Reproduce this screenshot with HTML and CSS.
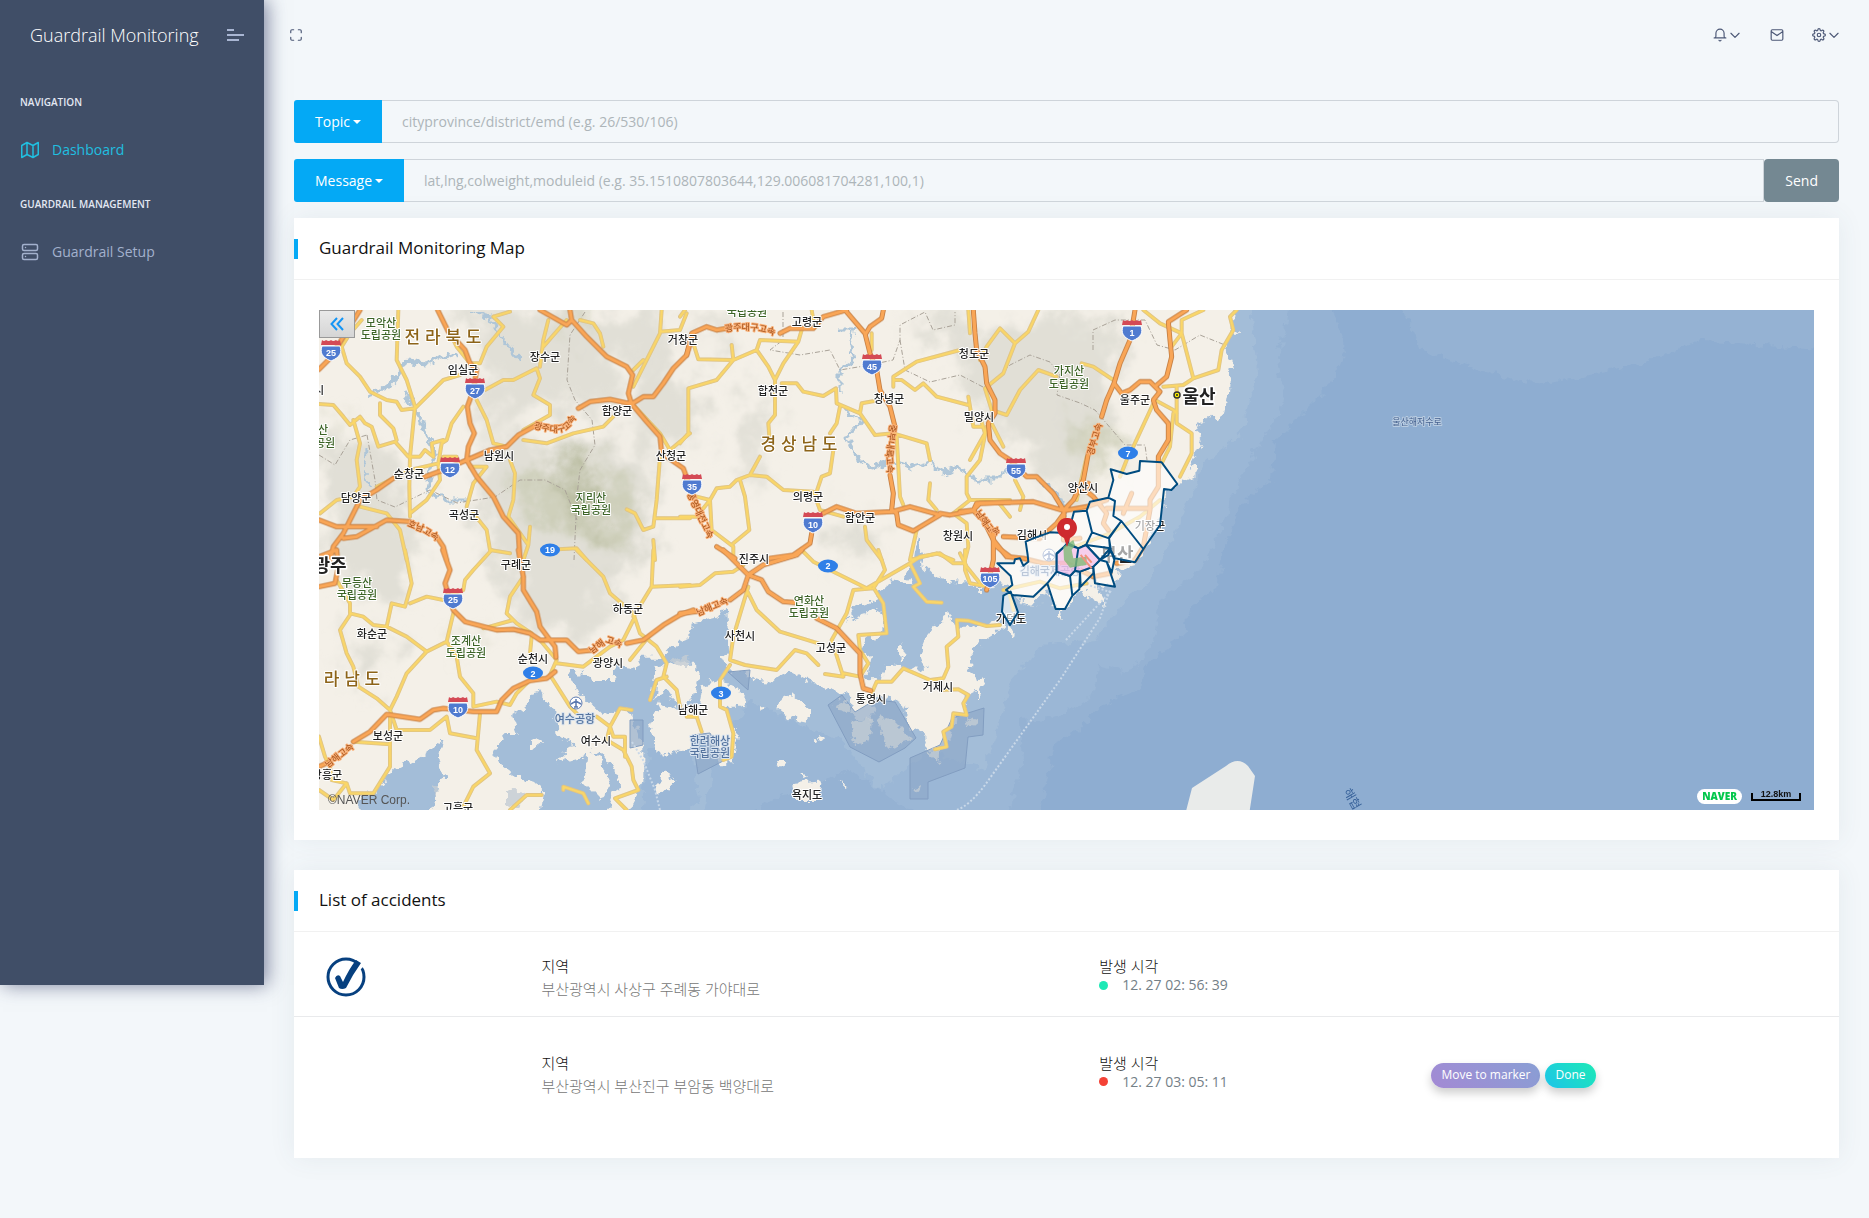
FILE: index.html
```html
<!DOCTYPE html>
<html lang="ko">
<head>
<meta charset="utf-8">
<title>Guardrail Monitoring</title>
<link rel="stylesheet" href="styles.css">
</head>
<body>
<div class="app">
  <aside class="sidebar">
    <div class="brand">
      <a class="brand-name" href="#">Guardrail Monitoring</a>
      <button class="icon-btn menu-btn" type="button" aria-label="Toggle menu">
        <svg width="17" height="12" viewBox="0 0 17 12"><path d="M0 1h7M0 6h17M0 11h12" stroke="#a9b6d3" stroke-width="2"/></svg>
      </button>
    </div>
    <nav>
      <h2 class="nav-title">NAVIGATION</h2>
      <a class="nav-link active" href="#">
        <svg width="18" height="18" viewBox="0 0 24 24"><path d="M1 6v16l7-4 8 4 7-4V2l-7 4-8-4-7 4zM8 2v16M16 6v16"/></svg>
        Dashboard</a>
      <h2 class="nav-title">GUARDRAIL MANAGEMENT</h2>
      <a class="nav-link" href="#">
        <svg width="18" height="18" viewBox="0 0 24 24"><rect x="2" y="2" width="20" height="8" rx="2"/><rect x="2" y="14" width="20" height="8" rx="2"/><path d="M6 6v.01M6 18v.01"/></svg>
        Guardrail Setup</a>
    </nav>
  </aside>

  <div class="page">
    <header class="topbar">
      <button class="icon-btn" type="button" aria-label="Full screen">
        <svg width="14" height="14" viewBox="0 0 24 24"><path d="M8 3H5a2 2 0 0 0-2 2v3m18 0V5a2 2 0 0 0-2-2h-3m0 18h3a2 2 0 0 0 2-2v-3M3 16v3a2 2 0 0 0 2 2h3"/></svg>
      </button>
      <div class="top-actions">
        <button class="icon-btn" type="button" aria-label="Notifications">
          <svg width="14" height="14" viewBox="0 0 24 24"><path d="M22 17H2a3 3 0 0 0 3-3V9a7 7 0 0 1 14 0v5a3 3 0 0 0 3 3zm-8.27 4a2 2 0 0 1-3.46 0"/></svg>
          <svg width="14" height="14" viewBox="0 0 24 24"><path class="chev" d="M5 9l7 7 7-7"/></svg>
        </button>
        <button class="icon-btn" type="button" aria-label="Messages">
          <svg width="14" height="14" viewBox="0 0 24 24"><path d="M4 3h16a2 2 0 0 1 2 2v14a2 2 0 0 1-2 2H4a2 2 0 0 1-2-2V5a2 2 0 0 1 2-2zM2 6l10 7 10-7"/></svg>
        </button>
        <button class="icon-btn" type="button" aria-label="Settings">
          <svg width="14" height="14" viewBox="0 0 24 24"><circle cx="12" cy="12" r="3"/><path d="M19.4 15a1.65 1.65 0 0 0 .33 1.82l.06.06a2 2 0 1 1-2.83 2.83l-.06-.06a1.65 1.65 0 0 0-2.8 1.17V21a2 2 0 0 1-4 0v-.09A1.65 1.65 0 0 0 7.2 19.6l-.06.06a2 2 0 1 1-2.83-2.83l.06-.06A1.65 1.65 0 0 0 3.1 14H3a2 2 0 0 1 0-4h.09A1.65 1.65 0 0 0 4.4 7.2l-.06-.06a2 2 0 1 1 2.83-2.83l.06.06A1.65 1.65 0 0 0 10 3.1V3a2 2 0 0 1 4 0v.09a1.65 1.65 0 0 0 2.8 1.3l.06-.06a2 2 0 1 1 2.83 2.83l-.06.06A1.65 1.65 0 0 0 20.9 10H21a2 2 0 0 1 0 4h-.09a1.65 1.65 0 0 0-1.51 1z"/></svg>
          <svg width="14" height="14" viewBox="0 0 24 24"><path class="chev" d="M5 9l7 7 7-7"/></svg>
        </button>
      </div>
    </header>

    <main class="content">
      <form class="publish">
        <div class="input-row">
          <button class="addon" type="button">Topic<span class="caret"></span></button>
          <input class="field field-last" type="text" aria-label="Topic" placeholder="cityprovince/district/emd (e.g. 26/530/106)">
        </div>
        <div class="input-row">
          <button class="addon" type="button">Message<span class="caret"></span></button>
          <input class="field" type="text" aria-label="Message" placeholder="lat,lng,colweight,moduleid (e.g. 35.1510807803644,129.006081704281,100,1)">
          <button class="send" type="submit">Send</button>
        </div>
      </form>

      <section class="card">
        <h1 class="card-title">Guardrail Monitoring Map</h1>
        <div class="card-body">
          <div class="map">
            <svg class="map-canvas" viewBox="319 310 1495 500" preserveAspectRatio="xMinYMid slice">
              <defs>
                <filter id="rough" x="0" y="0" width="1" height="1"><feTurbulence type="fractalNoise" baseFrequency=".11" numOctaves="3" seed="4"/><feDisplacementMap in="SourceGraphic" scale="13" xChannelSelector="R" yChannelSelector="G"/></filter>
                <filter id="hill" x="-.2" y="-.2" width="1.4" height="1.4"><feGaussianBlur stdDeviation="9" result="b"/><feTurbulence type="fractalNoise" baseFrequency=".03" numOctaves="4" seed="9"/><feDisplacementMap in="b" scale="70" xChannelSelector="R" yChannelSelector="G"/></filter>
                <g id="yellow" transform="translate(310 300) scale(.33333)">
                  <path d="M155 60L120 100 95 140 110 190 150 230 180 275 230 300 260 305 275 330 315 325 400 240 450 225M265 30L260 180 290 240 315 320 300 470 298 560 300 650M27 312L70 315 100 350 120 375 150 350 165 370 185 380 205 440 255 425 295 470 330 470 345 450 370 470 365 430 400 420M210 310L210 345 250 385 260 420M460 320L425 370 410 420 395 430 385 490 300 510 200 560M130 360L150 430 140 480 150 560 130 590 80 600 30 640M150 620L230 640 270 690 290 780M300 640L350 600 390 540 385 490M500 300L530 360 550 430 590 440M525 270L580 240 610 240 680 205 690 235 670 285 720 315 720 345 640 390M690 200L700 120 715 60M700 140L770 60M810 60L850 70 870 100 880 140M640 420L710 430 790 400 880 380 910 350M975 320L1050 400 1080 450M970 260L1010 180 1050 100 1055 30M970 210L1000 180M1050 95L1110 90 1130 40M1080 450L1140 400M600 480L615 520 610 600 595 650 655 735 640 780M655 735L660 680M480 500L530 500 490 550 470 620M490 640L530 690 540 750 600 760M1050 470L1040 600 1030 680 1000 690 975 640 950 628M1035 655L1140 655M550 50L580 80 530 140 510 190 480 190 440 140 420 100M1030 720L1035 780M700 750L800 745 830 780M400 470L440 470M550 50L600 35"/>
                  <path transform="translate(0 750)" d="M285 0L305 100 285 170 245 160 230 230M300 160L350 140 400 150M80 90L120 160 120 190 160 200 190 225 230 230 290 260 350 305 410 275 430 190M120 195L90 240 110 310 130 350 145 410 200 445 240 480 260 540 360 540 410 500M350 305L290 370 260 440 240 480M410 275L440 320 450 380 490 430 490 470 560 455 600 465 620 430 650 400M545 0L490 60 465 90 460 120 430 130M640 80L600 140 590 190 620 220 665 250M520 235L610 210M665 260L660 310M690 270L740 330 720 375 780 470 800 490M740 340L820 350 900 290 940 270 970 210M800 0L880 80 900 130 970 190 990 250 1040 290 1070 340 1060 380 1100 420 1110 470M1070 380L1040 390 1020 450M1020 255L960 330M1030 0L1025 110 970 200M1025 110L1140 105M510 490L500 600 540 670 490 710 460 770M410 500L420 550 500 565M27 560L45 620 60 650 65 690 110 700 120 730 190 730 240 650 240 500M130 575L240 583M27 720L70 750 110 700M600 780L650 735 695 735M760 720L760 710 820 730 835 760M860 500L900 530 890 570 940 600 965 650 970 690 985 720 915 745 950 780M900 530L930 475 965 480M900 530L910 560 945 560 945 620"/>
                  <path transform="translate(1110 0)" d="M40 130L55 178 160 180 230 150 240 120 355 125 365 90M155 135L160 180 110 240 25 265 25 400 0 430M230 150L265 200 285 240 310 190 355 125M285 240L285 345 265 370 268 410M240 470L210 525 260 530 310 570 400 575 420 630 490 650M210 525L170 540 150 560 110 565 90 600 95 690 160 740 160 780M180 540L195 590 208 690 160 730M0 650L50 650 90 600 50 590M305 250L350 250 370 275 430 288 468 265 470 310 540 340 585 405 640 400 740 430 750 480M480 320L470 370 450 400M460 450L450 520 425 530 405 590M540 340L545 310 600 300M640 260L640 230 710 185 840 150M640 240L665 240 705 270 730 250 770 290 865 315M865 290L880 380 905 380M650 410L655 500 660 590 670 615M750 550L745 600 770 630M555 680L560 720 605 780M920 380L900 480 860 530 860 580 870 600 990 600M870 600L820 640 860 670 865 740 855 780M710 690L690 780M395 30L400 60M950 600L990 650M575 100V150M865 30L870 100M0 50L15 30M690 780L770 760 820 780"/>
                  <path transform="translate(1110 750)" d="M0 110L60 105 105 70 160 65 190 45M205 110L160 260 150 330 195 345 290 360 345 300 380 310 415 345M200 120L230 180 300 245 415 280M365 0L400 35 560 115 620 80 690 40 720 20 780 10 820 40 850 40M595 0L615 60 580 115 520 120 500 190 455 270 490 380 435 372M490 370L540 380M585 120L610 160 620 250 535 255 540 300 565 340 540 380M690 40L700 60 720 100 700 110 740 155 785 158M855 0L855 60 870 100 925 110M150 345L120 390 120 470 140 480 160 550 155 620 130 630M20 500L50 500 65 545M575 430L590 395 635 395 670 355 750 390 790 385 805 350 800 290 835 260 830 210 865 212 920 228 960 225M780 420L835 418 865 435 850 460 860 495 820 490 815 530 790 545 800 590 765 598"/>
                  <path transform="translate(1950 0)" d="M165 130L120 85 80 140 60 180M165 130L130 220 75 265 95 330 140 345 180 270 235 210 290 230M165 130L205 95 235 30M365 190L400 200 460 240M550 30L600 70 665 100 700 235 775 210 785 150 820 90 810 50 830 30M665 100L635 140M665 100L665 60 730 30M610 260L670 255 700 235M650 260L650 370 695 400 695 460 660 530M585 300L640 330 650 340M585 300L520 440M500 480L480 530M165 540L190 590 180 630M380 470L350 600M640 340L630 440 600 500M130 870L240 845 300 865 380 850M345 740L450 700 540 650 600 600M60 350L75 400 30 480M150 885L160 930M95 370L130 440M0 760L20 800 60 850"/>
                </g>
                <g id="orange" transform="translate(310 300) scale(.33333)">
                  <path d="M27 208L60 175 100 110 150 30M383 30L415 95 465 150 480 190 500 210 490 270 472 320 480 370 493 400 475 440 470 480 500 530 550 590 580 650 625 700 630 780M345 530L400 510 470 480 540 450 590 440 625 405 680 375M805 325L840 305 900 298 965 312 1000 290 1030 290 1060 250 1090 205 1130 165 1150 100M690 30L770 75 785 60 780 30M785 60L830 110 890 170 950 200 968 225 955 280 965 312 1010 365 1050 410 1055 460 1120 505 1140 560M250 535L200 570 150 600 120 660 100 700 70 740 60 780M27 660L80 680 200 680M100 715L140 710 230 660 300 665M380 710L400 740 410 780"/>
                  <path transform="translate(0 750)" d="M398 0L420 60 405 100 430 180 465 215 560 240 610 238 660 250 690 270 770 270 805 305 850 300M625 0L640 80 640 120 680 185 690 230 720 270 735 290 738 322M950 280L1000 270 1060 225 1110 195 1150 180M735 365L710 385 660 392 610 415 575 450 560 485 490 485 400 475 370 480 330 508 230 493 180 545 130 575M60 635L27 650M27 110L75 100 85 50 80 0M27 20L80 0"/>
                  <path transform="translate(1110 0)" d="M20 165L35 100 80 80 110 90 140 85M300 100L330 85 400 85 430 50 500 30M495 30L555 100 570 160 590 210 600 270 630 320 645 380M558 100L570 80 605 55 610 30M630 525L640 580 635 630 650 640 655 675 700 693 780 645 690 620 635 635 530 640 470 620 430 640M780 640L810 645 880 632 890 610 990 607M880 632L910 660 950 740 990 770M880 30L885 100 890 150 915 200 920 250 945 300 945 340 925 370 930 420 960 460 990 480M20 540L30 560M110 740L165 775M395 700L390 730 340 765 270 775"/>
                  <path transform="translate(1110 750)" d="M130 0L205 75 245 90 265 125 310 155 345 158M0 190L50 185M150 150L190 120 205 75 250 45 350 15 365 0M410 205L470 235 540 310 540 370 550 415 572 422"/>
                  <path transform="translate(1950 0)" d="M150 480L200 530 230 530 280 580 312 632M0 635L40 630 60 610 220 605 312 632 380 620 440 600M310 632L340 600 370 540 385 460M425 350L440 300 462 250 480 190 510 120 525 30M385 550L375 570 400 590 440 640 430 670 445 690M680 30L625 65 630 120 635 170 620 230 585 260 600 275 580 300 590 330 625 370 625 420 595 470 595 560 570 600 570 630 550 740 525 780 470 790M462 250L485 280 510 270 540 245 570 245 600 275M312 640L290 670 240 715 130 710M100 720L140 770 190 775 250 790 320 790 400 830 450 820M100 700L100 780 80 870M440 625L570 625M515 580L490 640M312 640L310 720 360 715"/>
                </g>
                <g id="shield"><path d="M-9-4C-11 2-10 7 0 11C10 7 11 2 9-4Z" fill="#507bd0" stroke="#fff" stroke-width="1"/><path d="M-9-10Q-7-8-5-10Q-2-8 0-10Q2-8 5-10Q7-8 9-10L10-5H-10Z" fill="#d44a55"/></g>
                <ellipse id="national" rx="10" ry="6.5" fill="#2f7fe8"/>
                <path id="h1" d="M533 428Q566 438 572 424L588 402"/><path id="h2" d="M407 526L422 532 445 546"/><path id="h3" d="M592 654L607 643 629 650"/><path id="h4" d="M328 768L362 742"/><path id="h5" d="M725 332Q765 325 790 345"/><path id="h6" d="M890 424L886 455 888 486"/><path id="h7" d="M687 494L699 520 716 556"/><path id="h8" d="M975 513L987 530 1009 541"/><path id="h9" d="M698 616L736 600"/><path id="h10" d="M1093 456L1106 412"/>
              </defs>
              <rect x="319" y="310" width="1495" height="500" fill="#f4f0e8"/>
              <g filter="url(#hill)">
                <g fill="#dddbd2" opacity=".8">
                  <path d="M470 310H680L660 350 600 380 620 430 560 400 480 440 490 380Z"/><path d="M480 440L660 450 650 540 600 620 540 640 500 590 480 520Z"/><path d="M630 340L700 370 690 450 640 440Z"/><path d="M740 390L770 400 765 470 745 490Z"/><path d="M900 320H1120V390L1090 440 1070 520 1030 460 990 430 960 360Z"/><path d="M319 430L400 450 420 600 370 610 325 540Z"/><path d="M340 640L390 640 380 690 350 680Z"/><path d="M690 320L740 340 720 360Z"/><path d="M830 510L880 520 860 560 830 550Z"/>
                </g>
                <g fill="#c6c8af" opacity=".7"><path d="M540 460L610 470 640 500 620 550 570 540 520 500Z"/><path d="M562 310H600L590 325 570 325Z"/><path d="M1065 410L1110 420 1120 450 1100 480 1080 440Z"/><path d="M325 412L338 420 330 435Z"/><path d="M455 632L475 635 465 650Z"/></g>
                <path d="M560 460L590 490 600 540 570 500Z" fill="#a9ad8c" opacity=".8"/>
              </g>
              <g fill="none" stroke="#afc6d8" stroke-width="3" stroke-linejoin="round" filter="url(#rough)">
                <path d="M470 312L490 317 497 333 520 360M460 353L447 357 427 363 407 360 400 373 380 390 370 393M403 390L420 417 423 423 430 447 437 457 430 470 427 490 443 500 470 500M366 451L364 475 370 490"/>
                <path stroke-width="5" d="M427 363L407 360 400 373 384 391"/>
                <path d="M837 330L854 330 850 345 853 360 840 370 840 393M843 408L862 420 847 437 853 452 870 467 893 460 910 468 927 463 943 472 960 468 977 480 997 480 1010 467"/>
                <path d="M1040 480L1060 497 1067 513 1066 545"/>
              </g>
              <g fill="none" stroke="#a9a298" stroke-width="1" stroke-dasharray="5 2 1 2">
                <path d="M585 312L570 335 567 380 575 400 592 420 595 445 580 470 577 495 574 560M367 435L375 480 377 500 395 507 430 490 457 503 495 497 520 480 545 480 565 490 577 520M319 455L335 465 350 440 367 435M783 312V340L770 350 800 355 830 350 840 370 870 365 893 360 900 340 900 325 925 312 933 330 955 325 955 312M900 340L905 370 930 382 960 375 985 388 1010 365 1030 355 1050 362 1060 375 1057 395 1080 403 1095 410 1125 445 1145 445 1147 460M1093 350V330L1115 320 1145 320 1157 345 1175 350 1200 335 1225 345"/>
              </g>
              <g filter="url(#rough)">
                <g id="sea" fill="#a3bdd8">
                  <path transform="translate(310 300) scale(.33333)" d="M2785 -30L2770 80 2775 100 2755 130 2745 150 2765 200 2760 270 2750 290 2740 350 2720 370 2695 345 2685 370 2650 385 2680 410 2665 450 2640 500 2660 510 2650 530 2615 545 2600 570 2562 570 2560 620 2540 680 2500 750 2478 790 2425 805 2415 860 2370 850 2345 840 2390 920 2350 900 2320 870 2290 900 2270 925 2240 930 2215 870 2190 880 2170 905 2130 900 2095 880 2100 850 2050 840 2040 870 2000 870 1980 850 1910 840 1870 830 1840 800 1825 810 1830 840 1810 860 1750 835 1730 860 1700 880 1670 940 1620 955 1610 965 1700 925 1730 940 1720 1000 1670 1020 1655 1050 1680 1070 1670 1120 1700 1150 1730 1100 1790 1100 1850 1110 1830 1060 1850 1010 1900 950 1920 940 1940 980 1980 980 2070 970 2080 985 2040 1010 1990 1050 1980 1120 2010 1140 1990 1180 1970 1190 1970 1230 1930 1270 1910 1330 1880 1360 1840 1340 1850 1310 1790 1270 1780 1230 1800 1220 1770 1210 1730 1190 1700 1190 1680 1270 1630 1250 1620 1190 1600 1180 1510 1150 1440 1110 1410 1130 1390 1150 1330 1140 1300 1110 1260 1120 1240 1080 1260 1050 1255 970 1250 920 1230 950 1150 970 1130 1020 1110 1015 1060 1070 1000 1070 980 1110 915 1100 920 1140 850 1140 800 1110 770 1110 800 1170 850 1220 880 1250 950 1220 1000 1340 1000 1450 940 1560H4530V-30Z"/>
                  <path transform="translate(310 550) scale(.33333)" d="M690 415L700 450 735 480 740 560 790 580 740 640 870 600 900 640 930 700 890 790H690L700 710 640 690 570 640 550 600 590 555 620 555 600 500 650 470ZM400 570L390 620 400 680 360 790H140L160 740 200 720 250 660 330 620Z"/>
                  <path d="M920 550L928 585 915 590 905 575 912 560ZM850 609L875 600 872 608 855 618ZM916 535L925 555 920 575 912 560Z"/>
                </g>
                <path fill="#9bb7d6" d="M1250 300L1258 370 1248 410 1240 435 1205 462 1188 500 1170 545 1145 585 1125 600 1095 640 1040 645 1012 680 1000 720 985 770 930 750 880 790 840 740 790 720 750 700 715 760 700 830H1830V300ZM650 750L690 735 700 800 665 830 640 820Z"/>
                <path fill="#95b2d3" d="M1290 300L1278 360 1285 400 1262 440 1240 480 1225 520 1200 570 1160 600 1155 640 1130 672 1100 665 1090 700 1050 718 1020 720 1022 760 1005 825H1830V300ZM720 830L790 790 850 770 940 830Z"/>
                <path fill="#8eadd1" d="M1330 300L1345 350 1330 385 1300 415 1275 440 1272 480 1245 500 1230 530 1215 590 1190 608 1183 635 1145 665 1140 690 1100 705 1080 730 1053 745 1048 780 1036 825H1830V350L1700 340 1640 365 1540 385 1480 370 1420 350 1400 300Z"/>
                <g fill="#f4f0e8">
                  <path transform="translate(680 550) scale(.33333)" d="M100 390L160 400 200 450 190 470 140 470 170 560 160 640 120 640 80 570 0 600-50 620-90 520-60 460 0 480 60 470 70 410ZM285 465L330 430 390 480 380 515 330 505ZM285 630L325 630 320 655 295 655ZM340 700L430 690 425 750 345 750ZM470 690L510 715 495 715ZM410 560L435 570 420 580ZM360 665L390 680 370 690ZM240 465L260 475 245 480ZM740 10L780 60 760 70ZM650 290L670 280 665 340Z"/>
                  <path transform="translate(310 550) scale(.33333)" d="M1040 350L1130 330 1170 370 1150 440 1110 480 1070 420 1030 450ZM1020 520L1080 570 1040 600ZM660 560L700 580 660 600ZM830 600L870 620 900 700 870 750 820 700ZM1050 660L1100 690 1040 740Z"/>
                  <path d="M1008 625L1014 627 1012 636 1007 632ZM1058 606L1064 608 1060 620ZM975 680L985 678 975 700ZM1045 605L1030 603 1015 600Z"/>
                </g>
              </g>
              <g fill="#8da7c7" fill-opacity=".65" stroke="#829dc0" stroke-width="1"><path d="M828 705L842 695 855 712 875 700 895 702 916 738 905 748 879 762 850 747ZM952 718L984 708 983 735 968 737 965 768 928 782V799H910V758L940 745ZM728 672L750 670 748 690ZM692 735L710 733 725 760 698 774ZM630 720L643 720V745L630 748Z"/></g>
              <g fill="#c3ccd4" opacity=".8" filter="url(#rough)"><path d="M850 723L872 720 870 740 855 745ZM878 715L892 720 912 740 885 748ZM926 752L940 747 938 762ZM966 715L978 720 968 728ZM914 790L922 785 920 795ZM505 790L525 792 520 808 505 805ZM430 785L442 788 435 798ZM835 705L845 700 852 715ZM670 660L690 655 685 670Z"/></g>
              <path d="M1185 815L1192 788 1226 766Q1238 756 1248 766L1255 776 1249 815Z" fill="#e9ebea"/>
              <path d="M1066 640L1110 592 1085 584M957 810Q970 805 985 785L1060 680 1100 618 1110 590M632 742L643 760 655 790 660 810" fill="none" stroke="#c9d8e8" stroke-width="2" stroke-dasharray="2 2"/>
              <use href="#yellow" class="road y-edge"/><use href="#yellow" class="road y-fill"/>
              <use href="#orange" class="road o-edge"/><use href="#orange" class="road o-fill"/>

              <g class="road-name">
                <text><textPath href="#h1">광주대구고속</textPath></text><text><textPath href="#h2">호남고속</textPath></text><text><textPath href="#h3">남해고속</textPath></text><text><textPath href="#h4">남해고속</textPath></text><text><textPath href="#h5">광주대구고속</textPath></text><text><textPath href="#h6">중부내륙고속</textPath></text><text><textPath href="#h7">통영대전고속</textPath></text><text><textPath href="#h8">남해고속</textPath></text><text><textPath href="#h9">남해고속</textPath></text><text><textPath href="#h10">경부고속</textPath></text>
              </g>
              <g class="town">
                <text x="545" y="361">장수군</text><text x="463" y="374">임실군</text><text x="617" y="415">함양군</text><text x="499" y="460">남원시</text><text x="409" y="478">순창군</text><text x="356" y="502">담양군</text><text x="464" y="519">곡성군</text><text x="671" y="460">산청군</text><text x="683" y="344">거창군</text><text x="319" y="394">시</text>
                <text x="516" y="569">구례군</text><text x="628" y="613">하동군</text><text x="372" y="638">화순군</text><text x="533" y="663">순천시</text><text x="608" y="667">광양시</text><text x="596" y="745">여수시</text><text x="388" y="740">보성군</text><text x="327" y="779">장흥군</text><text x="458" y="812">고흥군</text>
                <text x="807" y="326">고령군</text><text x="889" y="403">창녕군</text><text x="773" y="395">합천군</text><text x="974" y="358">청도군</text><text x="979" y="421">밀양시</text><text x="808" y="501">의령군</text><text x="860" y="522">함안군</text><text x="958" y="540">창원시</text>
                <text x="754" y="563">진주시</text><text x="740" y="640">사천시</text><text x="831" y="652">고성군</text><text x="938" y="691">거제시</text><text x="871" y="703">통영시</text><text x="693" y="714">남해군</text><text x="807" y="799">욕지도</text>
                <text x="1135" y="404">울주군</text><text x="1083" y="492">양산시</text><text x="1032" y="539">김해시</text><text x="1150" y="530">기장군</text><text x="1011" y="623">가덕도</text>
              </g>
              <g class="town park">
                <text x="381" y="327">모악산</text><text x="381" y="339">도립공원</text><text x="591" y="502">지리산</text><text x="591" y="514">국립공원</text><text x="323" y="434">산</text><text x="325" y="447">공원</text><text x="357" y="587">무등산</text><text x="357" y="599">국립공원</text><text x="466" y="645">조계산</text><text x="466" y="657">도립공원</text><text x="747" y="316">국립공원</text><text x="809" y="605">연화산</text><text x="809" y="617">도립공원</text><text x="1069" y="375">가지산</text><text x="1069" y="388">도립공원</text>
              </g>
              <g class="town marine"><text x="710" y="745">한려해상</text><text x="710" y="757">국립공원</text><text x="575" y="723">여수공항</text><text x="1050" y="575">김해국제공항</text></g>
              <g class="province"><text x="443" y="343">전 라 북 도</text><text x="799" y="450">경 상 남 도</text><text x="352" y="685">라 남 도</text></g>
              <g class="city"><text x="330" y="572">광주</text><text x="1199" y="403">울산</text><text x="1117" y="561">부산</text></g>
              <g class="sea-name"><text x="1417" y="425">울산해저수로</text><text x="1352" y="803" class="strait" transform="rotate(60 1352 799)">해협</text></g>
              <circle cx="1177" cy="395" r="3" fill="#fff200" stroke="#333" stroke-width="1.5"/><circle cx="1177" cy="395" r="1" fill="#222"/>
              <g fill="none" stroke="#5b79b0"><circle cx="576" cy="703" r="6" fill="#fff"/><path d="M576 699v8M571 704l5-3 5 3M574 707h4" stroke-width="1.5"/><circle cx="1049" cy="555" r="6" fill="#fff"/><path d="M1049 551v8M1044 556l5-3 5 3M1047 559h4" stroke-width="1.5"/></g>
              <g class="shields">
                <use href="#shield" x="331" y="350"/><text x="331" y="356">25</text><use href="#shield" x="475" y="388"/><text x="475" y="394">27</text><use href="#shield" x="450" y="467"/><text x="450" y="473">12</text><use href="#shield" x="453" y="598"/><text x="453" y="603">25</text><use href="#shield" x="458" y="707"/><text x="458" y="713">10</text><use href="#shield" x="872" y="364"/><text x="872" y="370">45</text><use href="#shield" x="692" y="484"/><text x="692" y="490">35</text><use href="#shield" x="813" y="522"/><text x="813" y="528">10</text><use href="#shield" x="1132" y="330"/><text x="1132" y="336">1</text><use href="#shield" x="1016" y="468"/><text x="1016" y="474">55</text><use href="#shield" x="990" y="577"/><text x="990" y="582">105</text>
                <use href="#national" x="550" y="550"/><text x="550" y="553">19</text><use href="#national" x="533" y="673"/><text x="533" y="677">2</text><use href="#national" x="828" y="566"/><text x="828" y="569">2</text><use href="#national" x="721" y="693"/><text x="721" y="697">3</text><use href="#national" x="1128" y="453"/><text x="1128" y="457">7</text>
              </g>
              <g transform="translate(960 300) scale(.33333)" fill="#fff" fill-opacity=".6" stroke="#004c80" stroke-width="6" stroke-linejoin="round">
                <path d="M540 483L605 487 652 552 634 570 612 567 600 675 550 747 484 663 460 648 465 603 445 593 460 540 452 508 500 522 538 512ZM484 663L550 747 525 787 465 775 450 745 447 712ZM445 593L390 605 380 632 396 697 447 715 484 663 460 648 465 603ZM380 632L342 635 325 700 325 730 355 745 378 735 396 697ZM396 697L378 735 452 745 447 715ZM378 735L420 780 445 765 452 745ZM325 700L270 697 220 715 197 725 203 765 205 785 190 797 180 775 165 778 162 790 112 790 152 828 157 855 138 870 160 885 220 890 262 850 290 815 290 760 320 735ZM290 815L262 850 287 927 315 927 337 887 330 828ZM345 812L330 828 337 887 358 868 360 815ZM360 815L362 860 400 820 400 800ZM400 800L405 850 465 860 440 785 420 780ZM420 780L440 785 455 818 463 780 450 745ZM130 887L152 875 174 937 150 975 126 935Z"/>
                <path fill="#f6c6ee" fill-opacity=".8" d="M320 733L290 762 290 815 330 828 345 812 355 745ZM355 745L378 735 420 780 400 800 360 815 345 812Z"/>
                <path fill="#7fb977" fill-opacity=".8" stroke="none" d="M310 740L340 720 345 735 335 750 340 775 380 770 380 795 330 803 312 780Z"/>
                <path fill="none" stroke="#f0937f" d="M362 765L378 785 395 805M375 765L395 788"/>
              </g>
              <path d="M1067 547L1064 538C1052 532 1057 518 1067 518C1077 518 1082 532 1070 538Z" fill="#ce2a2e"/><circle cx="1067" cy="527" r="9" fill="#ce2a2e"/><circle cx="1067" cy="527" r="3" fill="#fff"/>
              <text class="copyright" x="328" y="804">©NAVER Corp.</text>
            </svg>
            <button class="map-toggle" type="button" aria-label="Collapse panel"><svg width="14" height="14" viewBox="0 0 14 14"><path d="M7 1L1.500 7L7 13M13 1L7.500 7L13 13" fill="none" stroke="#1495f5" stroke-width="2"/></svg></button>
            <div class="map-info"><span class="naver">NAVER</span><span class="scale">12.8km</span></div>
          </div>
        </div>
      </section>

      <section class="card">
        <h2 class="card-title">List of accidents</h2>
        <table class="accidents">
          <colgroup><col class="c-state"><col class="c-place"><col class="c-time"><col></colgroup>
          <tbody>
            <tr>
              <td><svg class="check" width="42" height="42" viewBox="0 0 42 42"><circle cx="21" cy="21" r="18" fill="none" stroke="#07407f" stroke-width="3"/><path d="M28 9L37 4 40 9 34 15Z" fill="#fff"/><path d="M10 22Q12 18 15 20L18 26Q24 13 31 4L36 7Q28 18 21 32Q17 34 14 32Z" fill="#07407f"/></svg></td>
              <td><h3 class="label">지역</h3><p class="place">부산광역시 사상구 주례동 가야대로</p></td>
              <td><h3 class="label">발생 시각</h3><p class="time"><span class="dot done"></span>12. 27 02: 56: 39</p></td>
              <td></td>
            </tr>
            <tr class="open">
              <td></td>
              <td><h3 class="label">지역</h3><p class="place">부산광역시 부산진구 부암동 백양대로</p></td>
              <td><h3 class="label">발생 시각</h3><p class="time"><span class="dot"></span>12. 27 03: 05: 11</p></td>
              <td><div class="actions"><button class="pill move" type="button">Move to marker</button><button class="pill finish" type="button">Done</button></div></td>
            </tr>
          </tbody>
        </table>
      </section>
    </main>
  </div>
</div>
</body>
</html>
```
FILE: styles.css
```css
* { box-sizing: border-box; }
body {
  margin: 0;
  background: #f3f7fa;
  color: #111;
  font: 14px/20px "Open Sans", "Noto Sans CJK KR", sans-serif;
}
h1, h2, h3, p { margin: 0; font-weight: 400; }
button, input { font: inherit; margin: 0; }
button { border: 0; padding: 0; cursor: pointer; }
a { text-decoration: none; }
svg { display: block; flex: none; }

.app { display: flex; align-items: flex-start; }

/* Sidebar */
.sidebar {
  flex: 0 0 264px;
  min-height: 985px;
  background: #404e67;
  box-shadow: 3px 0 18px rgba(43, 54, 96, .6);
}
.brand {
  display: flex;
  align-items: center;
  justify-content: space-between;
  height: 70px;
  padding: 0 20px 0 30px;
}
.brand-name { color: #fff; font-size: 18px; font-weight: 300; }
.nav-title {
  padding: 22px 20px 0;
  color: #e3e8f3;
  font-size: 10px;
  font-weight: 600;
}
.nav-link {
  display: flex;
  align-items: center;
  gap: 13px;
  height: 40px;
  margin: 18px 0 2px;
  padding: 0 21px;
  color: #a3b1cd;
}
.nav-link svg, .icon-btn svg {
  fill: none;
  stroke: currentColor;
  stroke-width: 2;
  stroke-linecap: round;
  stroke-linejoin: round;
}
.menu-btn svg { stroke-linecap: butt; }
.nav-link.active { color: #20bfe0; }

/* Top bar */
.page { flex: 1; min-width: 0; }
.topbar {
  display: flex;
  align-items: center;
  justify-content: space-between;
  height: 70px;
  padding: 0 28px 0 25px;
}
.top-actions { display: flex; align-items: center; gap: 28px; }
.icon-btn {
  display: flex;
  align-items: center;
  gap: 1px;
  background: none;
  color: #4c5876;
}

.content { padding: 30px 30px 60px; }

/* Publish form */
.input-row { display: flex; height: 43px; margin-bottom: 16px; }
.addon {
  display: flex;
  align-items: center;
  gap: 3px;
  padding: 0 21px;
  border-radius: 3px 0 0 3px;
  background: #04a9f5;
  color: #fff;
  font-weight: 500;
}
.caret { border: 4px solid transparent; border-top-color: #fff; border-bottom: 0; }
.field {
  flex: 1;
  min-width: 0;
  padding: 0 20px;
  border: 1px solid #ced4da;
  border-left: 0;
  background: transparent;
}
.field-last { border-radius: 0 4px 4px 0; }
.field::placeholder { color: #adb5b9; opacity: 1; }
.send { padding: 0 21px; border-radius: 4px; background: #748892; color: #fff; font-weight: 500; }

/* Cards */
.card {
  margin-bottom: 30px;
  background: #fff;
  box-shadow: 0 0 25px rgba(69, 90, 100, .08);
}
.card-title {
  position: relative;
  padding: 20px 25px 21px;
  border-bottom: 1px solid #f1f1f1;
  font-size: 17px;
  line-height: 20px;
}
.card-title::before {
  content: "";
  position: absolute;
  left: 0;
  top: 21px;
  width: 4px;
  height: 20px;
  background: #04a9f5;
}
.card-body { padding: 30px 25px; }

/* Map */
.map { position: relative; height: 500px; overflow: hidden; }
.map-canvas { width: 100%; height: 100%; font-family: "Noto Sans CJK KR", sans-serif; }
.road { fill: none; stroke-linejoin: round; stroke-linecap: round; }
.y-edge { stroke: #dbc18a; stroke-width: 12px; }
.y-fill { stroke: #fbd767; stroke-width: 7px; }
.o-edge { stroke: #c47e43; stroke-width: 15px; }
.o-fill { stroke: #f9a657; stroke-width: 10px; }
.map-canvas text { paint-order: stroke; stroke-linejoin: round; text-anchor: middle; }
.town { fill: #222; stroke: #fff; stroke-width: 2px; font-size: 11px; font-weight: 500; }
.park { fill: #3d6427; }
.marine { fill: #55749f; stroke: #d7e2ee; }
.province { fill: #8d6419; stroke: #fff; stroke-width: 2px; font-size: 17px; font-weight: 500; }
.city { fill: #222; stroke: #fff; stroke-width: 3px; font-size: 18px; font-weight: 700; }
.sea-name { fill: #45618f; stroke: #b9cce1; stroke-width: 2px; font-size: 9px; }
.strait { fill: #39639b; stroke: none; font-size: 12px; }
.road-name { fill: #a4521c; stroke: #f9b077; stroke-width: 2px; font-size: 9px; }
.map-canvas .road-name text { text-anchor: start; }
.shields { fill: #fff; font: 700 9px "Liberation Sans", sans-serif; }
.map-canvas .copyright { fill: #555; font: 12px "Liberation Sans", sans-serif; text-anchor: start; }
.map-toggle {
  position: absolute;
  left: 0;
  top: 0;
  display: flex;
  align-items: center;
  justify-content: center;
  width: 36px;
  height: 28px;
  border: 1px solid #999;
  background: linear-gradient(#e9e9e9, #d5d5d5);
}
.map-info {
  position: absolute;
  right: 13px;
  bottom: 6px;
  display: flex;
  align-items: center;
  gap: 9px;
}
.naver {
  padding: 0 5px;
  border-radius: 8px;
  background: #fff;
  color: #03c74c;
  font: 800 10px/15px "Open Sans", sans-serif;
}
.scale {
  width: 50px;
  height: 8px;
  border: 2px solid #000;
  border-top: 0;
  font: 700 9px/2px "Liberation Sans", sans-serif;
  text-align: center;
}

/* Accident list */
.accidents { width: 100%; border-collapse: collapse; table-layout: fixed; }
.c-state { width: 14.4%; }
.c-place { width: 36.1%; }
.c-time { width: 21.5%; }
.accidents td { height: 84px; padding: 24px 25px 0; vertical-align: top; }
.accidents .open td { height: 142px; padding-top: 36px; border-top: 1px solid #e9eaec; }
.check { margin-left: 6px; }
.label { font-size: 15px; font-weight: 300; line-height: 20px; }
.place { color: #777; font-size: 15px; font-weight: 300; line-height: 26px; }
.time { display: flex; align-items: center; gap: 14px; color: #748087; line-height: 18px; }
.dot { width: 9px; height: 9px; border-radius: 50%; background: #f44236; }
.dot.done { background: #1de9b6; }
.actions { display: flex; gap: 5px; padding-top: 10px; }
.pill {
  height: 25px;
  padding: 0 10px;
  border-radius: 13px;
  box-shadow: 0 5px 10px rgba(0, 0, 0, .2);
  color: #fff;
  font-size: 12px;
  font-weight: 500;
}
.move { background: linear-gradient(45deg, #a389d4, #899ed4); }
.finish { background: linear-gradient(45deg, #1dc4e9, #1de9b6); }
```
